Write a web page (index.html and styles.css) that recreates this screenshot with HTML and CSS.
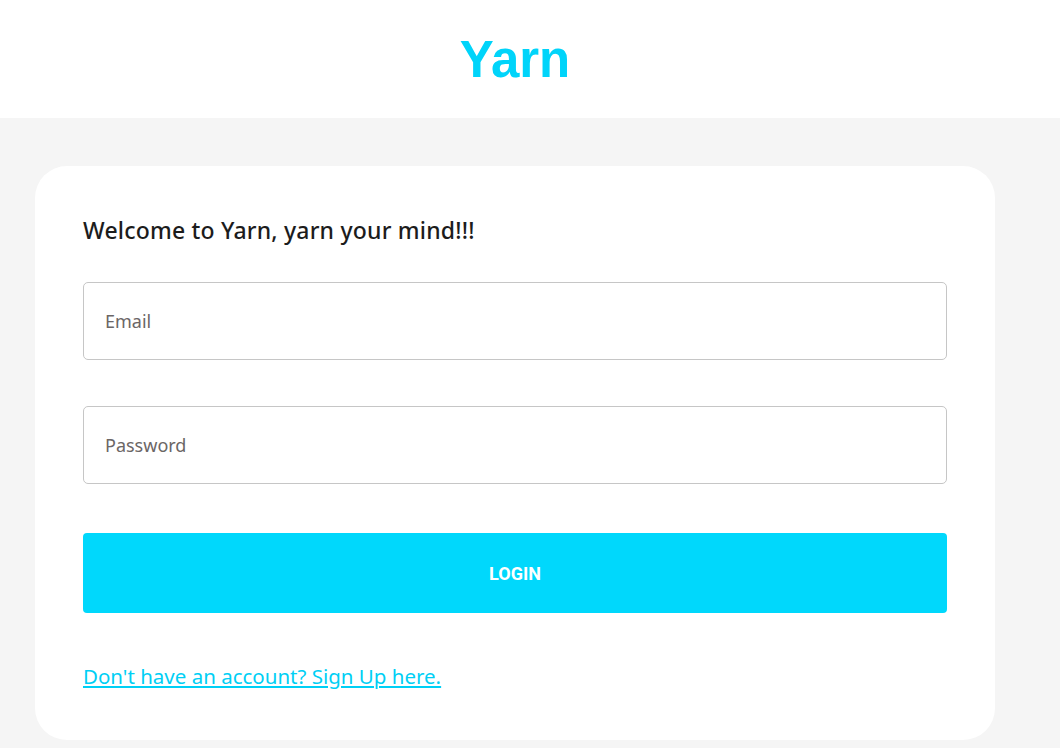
FILE: index.html
```html
<!DOCTYPE html>
<html lang="en">
<head>
<meta charset="utf-8">
<title>Yarn</title>
<link rel="stylesheet" href="styles.css">
</head>
<body>
  <header class="topbar">
    <div class="container">
      <h1 class="brand">Yarn</h1>
    </div>
  </header>
  <main class="page">
    <div class="container">
      <section class="card">
        <h2 class="welcome">Welcome to Yarn, yarn your mind!!!</h2>
        <form class="form">
          <input class="field" type="email" placeholder="Email">
          <input class="field" type="password" placeholder="Password">
          <button class="btn" type="button">LOGIN</button>
        </form>
        <a class="signup" href="#">Don't have an account? Sign Up here.</a>
      </section>
    </div>
  </main>
</body>
</html>
```

FILE: styles.css
```css
* { box-sizing: border-box; }
html, body { margin: 0; padding: 0; }
body {
  font-family: "Noto Sans", "Open Sans", sans-serif;
  background: #f5f5f5;
  color: #1c1c1c;
}
.container {
  width: 960px;
  margin-left: 35px;
}
.topbar {
  background: #fff;
  height: 118px;
  display: flex;
  align-items: center;
}
.brand {
  margin: 0;
  text-align: center;
  font-family: "Liberation Sans", Arial, sans-serif;
  font-weight: 700;
  font-size: 51px;
  line-height: 1;
  color: #00d4fa;
}
.page {
  padding-top: 48px;
}
.card {
  background: #fff;
  border-radius: 32px;
  padding: 48px 48px 50px;
}
.welcome {
  margin: 0 0 36px;
  font-size: 23px;
  font-weight: 500;
  letter-spacing: 0.2px;
  line-height: 32px;
  color: #1c1c1c;
}
.form {
  display: flex;
  flex-direction: column;
  gap: 46px;
}
.field {
  height: 78px;
  border: 1px solid #c6c6c6;
  border-radius: 5px;
  padding: 0 21px;
  font-family: inherit;
  font-size: 18px;
  color: #333;
  outline: none;
}
.field::placeholder { color: #6b6666; }
.btn {
  margin-top: 3px;
  height: 80px;
  border: none;
  border-radius: 4px;
  background: #00d8fc;
  color: #fff;
  font-family: "Roboto", "Liberation Sans", sans-serif;
  font-weight: 700;
  font-size: 18px;
}
.signup {
  display: inline-block;
  margin-top: 49px;
  font-size: 20.5px;
  line-height: 28px;
  color: #00cff5;
  text-decoration: underline;
}
```
